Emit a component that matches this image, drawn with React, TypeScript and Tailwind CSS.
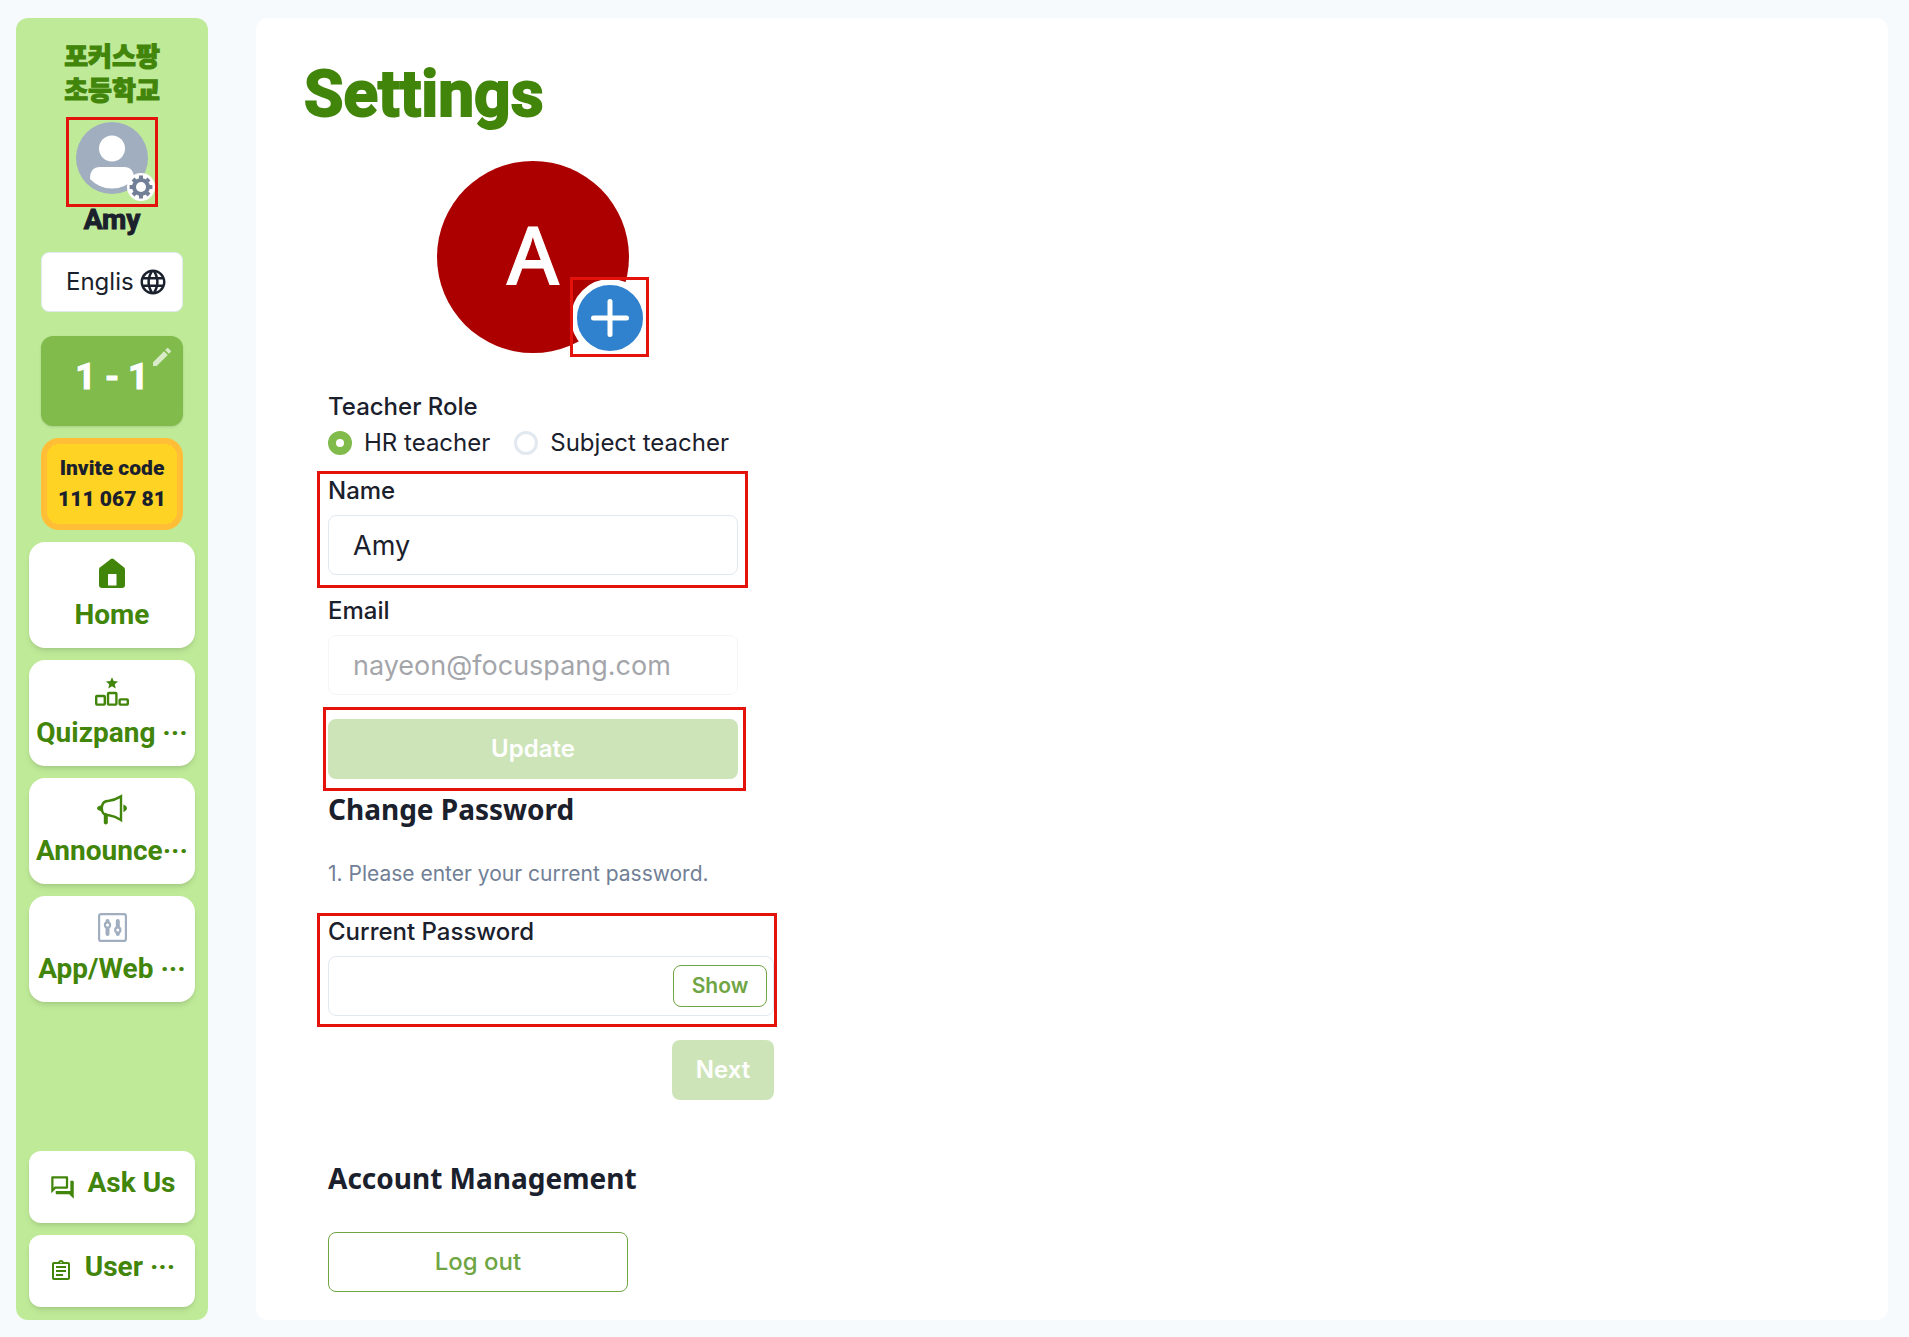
import React, { useState, ChangeEvent } from "react";
import { MdEdit, MdLanguage, MdOutlineAssignment, MdOutlineQuestionAnswer } from "react-icons/md";

interface MenuItem {
    label: string;
    icon: React.ReactNode;
}

const HomeIcon = () => (
    <svg width="26" height="30" viewBox="0 0 26 30">
        <path d="M11.6 1.2 L1.2 9.2 Q0 10.2 0 11.6 V27 Q0 30 3 30 H23 Q26 30 26 27 V11.6 Q26 10.2 24.8 9.2 L14.8 1.2 Q13.2 0 11.6 1.2 Z" fill="#42850b" />
        <rect x="9" y="16" width="8.5" height="11.5" rx="0.6" fill="#fff" />
    </svg>
);

const QuizIcon = () => (
    <svg width="34" height="29" viewBox="0 0 34 29" fill="none" stroke="#42850b" strokeWidth="2.4">
        <path d="M17 0.2 L18.7 4 L23 4.4 L19.8 7.2 L20.7 11.4 L17 9.2 L13.3 11.4 L14.2 7.2 L11 4.4 L15.3 4 Z" fill="#42850b" stroke="none" />
        <rect x="1.2" y="19" width="8.6" height="8.6" rx="0.8" />
        <rect x="13" y="16" width="8.4" height="11.6" rx="0.8" />
        <rect x="24.6" y="22.4" width="8.2" height="5.2" rx="0.8" />
    </svg>
);

const MegaphoneIcon = () => (
    <svg width="30" height="31" viewBox="0 0 30 31" fill="none" stroke="#42850b" strokeWidth="2.4">
        <path d="M24 2.4 V26 Q18 22 12 21.2 Q4.8 21.6 4.8 14 Q5 6.8 12 6.8 Q18 6 24 2.4 Z" />
        <path d="M4 11.2 Q0 12.4 0 14.2 Q0 16 4 17.2 Z" fill="#42850b" stroke="none" />
        <path d="M26.4 10.4 Q30 12 30 14.2 Q30 16.4 26.4 18 Z" fill="#42850b" stroke="none" />
        <path d="M8.8 21 V28.6" strokeWidth="4" strokeLinecap="round" />
    </svg>
);

const SlidersIcon = () => (
    <svg width="29" height="29" viewBox="0 0 29 29" fill="none" stroke="#a0aec0" strokeWidth="2.2">
        <rect x="1.1" y="1.1" width="26.8" height="26.8" rx="2" />
        <path d="M9.5 8 V21 M19.8 8 V21" strokeWidth="4" strokeLinecap="round" />
        <circle cx="9.5" cy="12" r="2.6" fill="#fff" />
        <circle cx="19.8" cy="17" r="2.6" fill="#fff" />
    </svg>
);

const GearIcon = () => (
    <svg width="24" height="24" viewBox="0 0 24 24">
        <g stroke="#718096" strokeWidth="4">
            <path d="M12 0.6 V23.4 M0.6 12 H23.4 M4 4 L20 20 M20 4 L4 20" />
        </g>
        <circle cx="12" cy="12" r="9" fill="#718096" />
        <circle cx="12" cy="12" r="5" fill="#fff" />
    </svg>
);

const PersonIcon = () => (
    <svg width="72" height="72" viewBox="0 0 72 72">
        <circle cx="36" cy="36" r="36" fill="#a0aec0" />
        <circle cx="36" cy="26.5" r="13" fill="#fff" />
        <path d="M24 45 H48 Q58 45 58 57 Q49 66.5 36 66.5 Q23 66.5 14 57 Q14 45 24 45 Z" fill="#fff" />
    </svg>
);

const menu: MenuItem[] = [
    { label: "Home", icon: <HomeIcon /> },
    { label: "Quizpang ···", icon: <QuizIcon /> },
    { label: "Announce···", icon: <MegaphoneIcon /> },
    { label: "App/Web ···", icon: <SlidersIcon /> },
];

const Sidebar = () => {
    const [language, setLanguage] = useState("English");

    return (
        <aside className="flex flex-col items-center w-48 shrink-0 px-[13px] pt-[22px] pb-[13px] bg-[#bfeb98] rounded-xl [font-family:Roboto,'Noto_Sans_CJK_KR',sans-serif] font-bold">
            <div className="text-[26px] leading-[34px] text-center font-black text-[#42850b] [-webkit-text-stroke:1px]">
                <div>포커스팡</div>
                <div>초등학교</div>
            </div>
            <button aria-label="Profile settings" className="relative mt-[14px]">
                <PersonIcon />
                <span className="absolute -right-[7px] -bottom-[7px] flex items-center justify-center size-7 bg-white rounded-full">
                    <GearIcon />
                </span>
                <span className="absolute -left-[10px] -right-[10px] -top-[5px] -bottom-[13px] border-3 border-[#e3120b]" />
            </button>
            <div className="mt-2 text-[28px] leading-9 text-[#1a202c] [-webkit-text-stroke:1px]">Amy</div>
            <div className="relative mt-[14px] w-[142px] h-[60px]">
                <select
                    aria-label="Language"
                    value={language}
                    onChange={(event: ChangeEvent<HTMLSelectElement>) => setLanguage(event.target.value)}
                    className="appearance-none w-full h-full pl-6 pr-12 bg-white border border-[#e2e8f0] rounded-lg [font-family:Inter,sans-serif] font-normal text-2xl text-[#1a202c]"
                >
                    <option>English</option>
                </select>
                <MdLanguage size={30} className="absolute right-[15px] top-[15px] text-[#1a202c] pointer-events-none" />
            </div>
            <button className="relative mt-6 w-[142px] h-[90px] pb-2 bg-[#80bb4b] rounded-xl shadow-sm text-white text-4xl [-webkit-text-stroke:1px]">
                1 - 1
                <MdEdit size={24} className="absolute right-[9px] top-[9px] opacity-70" />
            </button>
            <button className="mt-3 w-[142px] h-[92px] bg-[#ffd324] border-6 border-[#ffbe35] rounded-[18px] text-[21px] leading-[31px] font-black text-[#1a202c] whitespace-nowrap">
                <span className="block">Invite code</span>
                <span className="block">111 067 81</span>
            </button>
            <nav className="flex flex-col gap-3 mt-3 w-full">
                {menu.map(item => (
                    <a
                        key={item.label}
                        href="#"
                        className="flex flex-col items-center h-[106px] pt-[15px] bg-white rounded-2xl shadow-md overflow-hidden text-[28px] leading-9 text-[#42850b] whitespace-nowrap"
                    >
                        <span className="flex items-center justify-center h-8">{item.icon}</span>
                        <span className="mt-2">{item.label}</span>
                    </a>
                ))}
            </nav>
            <div className="flex flex-col gap-3 mt-auto w-full text-[28px] leading-9 text-[#42850b]">
                <a href="#" className="flex items-center justify-center gap-3 h-[72px] bg-white rounded-xl shadow-md whitespace-nowrap">
                    <MdOutlineQuestionAnswer size={27} />
                    <span className="pb-2">Ask Us</span>
                </a>
                <a href="#" className="flex items-center justify-center gap-3 h-[72px] bg-white rounded-xl shadow-md whitespace-nowrap">
                    <MdOutlineAssignment size={24} />
                    <span className="pb-2">User ···</span>
                </a>
            </div>
        </aside>
    );
};

const roles = ["HR teacher", "Subject teacher"];

const Settings = () => {
    const [role, setRole] = useState("HR teacher");
    const [name, setName] = useState("Amy");
    const [password, setPassword] = useState("");
    const [visible, setVisible] = useState(false);

    return (
        <main className="flex-1 px-12 pt-9 pb-6 bg-white rounded-xl">
            <h1 className="h-[107px] text-[64px] leading-[82px] font-bold text-[#42850b] [font-family:Roboto,sans-serif] [-webkit-text-stroke:2px]">Settings</h1>
            <div className="flex flex-col items-start pl-6">
                <div className="w-[410px]">
                    <div className="relative flex items-center justify-center mx-auto pb-2 size-48 bg-[#ac0000] rounded-full text-white text-[80px] [font-family:'Noto_Sans',sans-serif] font-medium [-webkit-text-stroke:1px]">
                        A
                        <button
                            aria-label="Change picture"
                            className="absolute -right-5 -bottom-1 flex items-center justify-center size-[78px] bg-[#3182ce] border-6 border-white rounded-full"
                        >
                            <svg width="38" height="38" viewBox="0 0 38 38" stroke="#fff" strokeWidth="5" strokeLinecap="round">
                                <path d="M19 2.5 V35.5 M2.5 19 H35.5" />
                            </svg>
                        </button>
                        <span className="absolute -right-5 -bottom-1 w-[79px] h-20 border-3 border-[#e3120b]" />
                    </div>

                    <fieldset className="mt-9">
                        <legend className="font-medium leading-9">Teacher Role</legend>
                        <div className="flex gap-6">
                            {roles.map(item => (
                                <label key={item} className="flex items-center gap-3 leading-9 whitespace-nowrap">
                                    <input
                                        type="radio"
                                        name="role"
                                        value={item}
                                        checked={role === item}
                                        onChange={() => setRole(item)}
                                        className="appearance-none size-6 border-3 border-[#e2e8f0] rounded-full checked:border-8 checked:border-[#80bb4b]"
                                    />
                                    {item}
                                </label>
                            ))}
                        </div>
                    </fieldset>

                    <div className="relative mt-3">
                        <span className="absolute -left-[11px] -right-[10px] -top-[2px] -bottom-[13px] border-3 border-[#e3120b] pointer-events-none" />
                        <label htmlFor="name" className="block font-medium leading-9">Name</label>
                        <input
                            id="name"
                            value={name}
                            onChange={event => setName(event.target.value)}
                            className="mt-[6px] w-full h-[60px] px-6 border border-[#e2e8f0] rounded-lg text-[27px]"
                        />
                    </div>

                    <div className="mt-[18px]">
                        <label htmlFor="email" className="block font-medium leading-9">Email</label>
                        <input
                            id="email"
                            value="nayeon@focuspang.com"
                            disabled
                            className="mt-[6px] w-full h-[60px] px-6 border border-[#e2e8f0] rounded-lg text-[27px] opacity-40"
                        />
                    </div>

                    <div className="relative mt-6">
                        <span className="absolute -left-[5px] -right-2 -top-3 -bottom-3 border-3 border-[#e3120b] pointer-events-none" />
                        <button disabled className="block w-full h-[60px] bg-[#cde4b8] rounded-lg text-white font-semibold">Update</button>
                    </div>
                </div>

                <h2 className="mt-3 text-[28px] leading-9 font-bold [font-family:'Noto_Sans',sans-serif]">Change Password</h2>
                <p className="mt-[31px] text-[21px] leading-8 text-[#718096]">1. Please enter your current password.</p>

                <div className="relative mt-6 w-[446px]">
                    <label htmlFor="password" className="block font-medium leading-9">Current Password</label>
                    <div className="flex items-center mt-[6px] w-full h-[60px] pr-[6px] border border-[#e2e8f0] rounded-lg">
                        <input
                            id="password"
                            type={visible ? "text" : "password"}
                            value={password}
                            onChange={event => setPassword(event.target.value)}
                            className="flex-1 min-w-0 h-full px-6 text-[27px] outline-none"
                        />
                        <button
                            onClick={() => setVisible(!visible)}
                            className="w-[94px] h-[42px] border border-[#6fa544] rounded-lg text-[21px] font-semibold text-[#6fa544]"
                        >
                            Show
                        </button>
                    </div>
                    <span className="absolute -left-[11px] -right-[3px] -top-px -bottom-[11px] border-3 border-[#e3120b] pointer-events-none" />
                </div>
                <div className="flex justify-end mt-6 w-[446px]">
                    <button disabled className="w-[102px] h-[60px] bg-[#cde4b8] rounded-lg text-white font-semibold">Next</button>
                </div>

                <h2 className="mt-15 text-[28px] leading-9 font-bold [font-family:'Noto_Sans',sans-serif]">Account Management</h2>
                <button className="mt-9 w-[300px] h-[60px] border border-[#6fa544] rounded-lg font-medium text-[#6fa544]">Log out</button>
            </div>
        </main>
    );
};

const App = () => (
    <div className="flex gap-12 min-h-screen pt-[18px] pb-[17px] pl-4 pr-[21px] bg-[#f6fafd] text-2xl text-[#1a202c] [font-family:Inter,sans-serif]">
        <Sidebar />
        <Settings />
    </div>
);

export default App;
